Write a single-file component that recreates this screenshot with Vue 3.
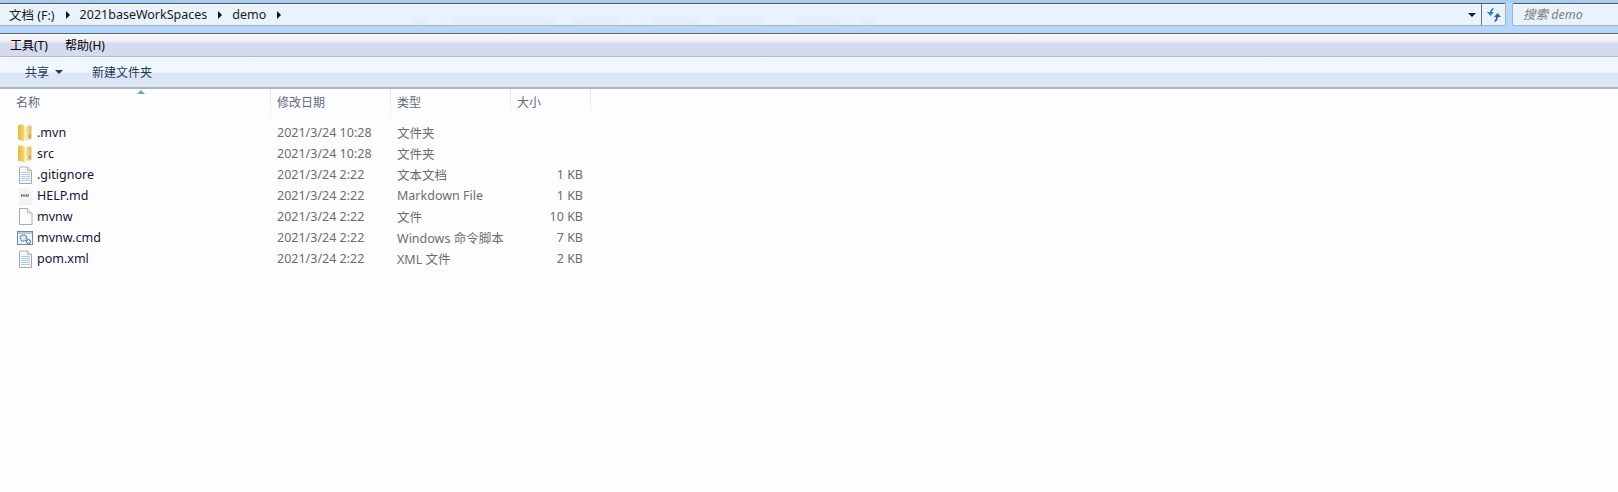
<script setup>
const files = [
  { name: '.mvn', date: '2021/3/24 10:28', type: '文件夹', size: '', icon: 'folder' },
  { name: 'src', date: '2021/3/24 10:28', type: '文件夹', size: '', icon: 'folder' },
  { name: '.gitignore', date: '2021/3/24 2:22', type: '文本文档', size: '1 KB', icon: 'text' },
  { name: 'HELP.md', date: '2021/3/24 2:22', type: 'Markdown File', size: '1 KB', icon: 'md' },
  { name: 'mvnw', date: '2021/3/24 2:22', type: '文件', size: '10 KB', icon: 'blank' },
  { name: 'mvnw.cmd', date: '2021/3/24 2:22', type: 'Windows 命令脚本', size: '7 KB', icon: 'cmd' },
  { name: 'pom.xml', date: '2021/3/24 2:22', type: 'XML 文件', size: '2 KB', icon: 'text' },
]
const crumbs = ['文档 (F:)', '2021baseWorkSpaces', 'demo']
const smudges = [
  { left: 415, width: 12 }, { left: 450, width: 105 }, { left: 572, width: 50 },
  { left: 650, width: 50 }, { left: 715, width: 50 }, { left: 795, width: 45 }, { left: 858, width: 16 },
]
const lines = [6.5, 8.5, 10.5, 12.5, 14.5]
</script>

<template>
  <div class="window">
    <div class="titlebar">
      <div class="address">
        <span v-for="s in smudges" :key="s.left" class="smudge" :style="{ left: s.left + 'px', width: s.width + 'px' }"></span>
        <div class="crumbs">
          <template v-for="c in crumbs" :key="c">
            <span class="crumb">{{ c }}</span>
            <span class="arrow"></span>
          </template>
        </div>
        <span class="drop"></span>
        <span class="refresh">
          <svg width="14" height="14" viewBox="0 0 14 14">
            <path d="M6.5 0 C4.5 .5 3.5 1.5 3 4 L0 4 L3.5 8 L7 4 L4.8 4 C5 2.8 5.6 2.2 6.5 1.8 Z" fill="#2f7fb8" />
            <path d="M7.5 14 C9.5 13.5 10.5 12.5 11 9 L14 9 L10.5 5 L7 9 L9.2 9 C9 11 8.4 11.8 7.5 12.2 Z" fill="#2c5fa5" />
          </svg>
        </span>
      </div>
      <div class="search">搜索 demo</div>
    </div>
    <div class="menubar">
      <span class="menu">工具(T)</span>
      <span class="menu">帮助(H)</span>
    </div>
    <div class="toolbar">
      <span class="tool">共享<span class="tool-caret"></span></span>
      <span class="tool">新建文件夹</span>
    </div>
    <div class="head">
      <div class="col c-name">名称<span class="sort"></span></div>
      <div class="col">修改日期</div>
      <div class="col">类型</div>
      <div class="col">大小</div>
    </div>
    <div class="list">
      <div v-for="f in files" :key="f.name" class="row">
        <div class="r-name">
          <span class="ico">
            <svg v-if="f.icon === 'folder'" width="16" height="18" viewBox="0 0 16 18">
              <defs>
                <linearGradient id="fl" x1="0" y1="0" x2="1" y2="0">
                  <stop offset="0" stop-color="#e2b740" />
                  <stop offset="1" stop-color="#f3d672" />
                </linearGradient>
                <linearGradient id="fr" x1="0" y1="0" x2="1" y2="0">
                  <stop offset="0" stop-color="#f0dc98" />
                  <stop offset="1" stop-color="#d8b865" />
                </linearGradient>
              </defs>
              <path d="M1 2 L2 0.5 L6 0.5 L7 2 L7 17 L2 16 L1 15 Z" fill="url(#fl)" />
              <path d="M7 2 L10 3 L10 16 L7 17 Z" fill="#f8ebb0" />
              <path d="M10 1.5 L14 1.5 L14.5 3 L14.5 15 L10 16 Z" fill="url(#fr)" />
              <rect x="12" y="11" width="1" height="2.5" fill="#5a9ad0" />
            </svg>
            <svg v-else-if="f.icon === 'text'" width="16" height="18" viewBox="0 0 16 18">
              <path d="M2.5 1.5 L4 .5 L5.5 1.5 L7 .5 L8.5 1.5 L10 .5 L11 1.5 L14.5 4.5 V17.5 H2.5 Z" fill="#f6f9fc" stroke="#a5a9af" />
              <path d="M10.5 1 V4.5 H14.5" fill="#e6e9ed" stroke="#b4b8bd" />
              <path v-for="y in lines" :key="y" :d="`M4 ${y} H13`" stroke="#b2cbe6" />
            </svg>
            <svg v-else-if="f.icon === 'md'" width="16" height="18" viewBox="0 0 16 18">
              <path d="M2 1 H11 L15 5 V18 H2 Z" fill="#f3f3f3" />
              <path d="M4 8.5 H12" stroke="#555" stroke-width="2.5" stroke-dasharray="1 .7" />
            </svg>
            <svg v-else-if="f.icon === 'blank'" width="16" height="18" viewBox="0 0 16 18">
              <path d="M2.5 .5 H10.5 L15 5 V16.5 H2.5 Z" fill="#fcfcfc" stroke="#a9acb0" />
              <path d="M10.5 .5 V5 H15" fill="#eeeff1" stroke="#b9bbbe" />
            </svg>
            <svg v-else width="16" height="16" viewBox="0 0 16 16">
              <rect x=".5" y="1.5" width="15" height="13" fill="#eff4f8" stroke="#7c8795" />
              <path d="M1 3 H15" stroke="#b6cbdf" stroke-width="2" />
              <circle cx="6.5" cy="8" r="3.2" fill="#dbe6ef" stroke="#55789a" stroke-width="1.3" stroke-dasharray="1.4 .7" />
              <circle cx="11.5" cy="11.5" r="2" fill="#e6eff6" stroke="#3e6f9d" />
            </svg>
          </span>
          <span class="fname">{{ f.name }}</span>
        </div>
        <div class="cell">{{ f.date }}</div>
        <div class="cell">{{ f.type }}</div>
        <div class="r-size">{{ f.size }}</div>
      </div>
    </div>
  </div>
</template>

<style>
html, body { margin: 0; background: #fdfdfd; }
</style>

<style scoped>
.window {
  width: 1618px;
  height: 492px;
  overflow: hidden;
  background: #fdfdfd;
  font-family: "Noto Sans", "Noto Sans CJK SC", sans-serif;
  font-size: 12px;
  color: #000;
}
.titlebar {
  height: 34px;
  box-sizing: border-box;
  padding-top: 3px;
  border-bottom: 1px solid #5a6570;
  background: linear-gradient(#a9cdf3 0, #a9cdf3 3px, #b4d8fb 3px);
  display: flex;
  align-items: flex-start;
}
.address, .search {
  height: 23px;
  box-sizing: border-box;
  border: 1px solid #a7b0ba;
  border-top-color: #4e5966;
  background: #e9f3fe;
  box-shadow: inset 0 1px 0 #fff;
}
.address {
  width: 1506px;
  display: flex;
  align-items: center;
  border-left: 0;
  border-radius: 0 2px 2px 0;
  position: relative;
}
.smudge {
  position: absolute;
  top: 15px;
  height: 4px;
  background: #e0e9f3;
  filter: blur(2px);
}
.crumbs {
  flex: 1;
  display: flex;
  align-items: center;
  padding-left: 9px;
  font-size: 12.5px;
  color: #1a1a1a;
  position: relative;
}
.arrow {
  width: 0;
  height: 0;
  margin: 0 10px 0 11px;
  border-left: 4px solid #111;
  border-top: 4px solid transparent;
  border-bottom: 4px solid transparent;
}
.drop {
  width: 0;
  height: 0;
  margin-right: 5px;
  border-top: 4px solid #10104a;
  border-left: 4px solid transparent;
  border-right: 4px solid transparent;
}
.refresh {
  width: 24px;
  height: 21px;
  box-sizing: border-box;
  border-left: 1px solid #6b7580;
  display: flex;
  align-items: center;
  justify-content: center;
}
.search {
  width: 106px;
  margin-left: 6px;
  border-right: 0;
  border-radius: 2px 0 0 2px;
  color: #7d7d7d;
  font-style: italic;
  font-size: 12.5px;
  padding-left: 10px;
  line-height: 21px;
}
.menubar {
  height: 23px;
  box-sizing: border-box;
  background: linear-gradient(#fbfbfd 0, #eceef6 8px, #d5daee 9px, #d5daee 100%);
  border-bottom: 1px solid #b5bccf;
  display: flex;
  align-items: center;
  padding-left: 10px;
  gap: 17px;
}
.toolbar {
  height: 32px;
  box-sizing: border-box;
  border-bottom: 2px solid #a8b6c8;
  background: linear-gradient(#eff6fe 0, #f3f8fe 15px, #dce6f4 16px, #dce6f4 100%);
  display: flex;
  align-items: center;
  padding-left: 25px;
  gap: 29px;
  color: #1e395b;
}
.tool { display: flex; align-items: center; }
.tool-caret {
  width: 0;
  height: 0;
  margin-left: 6px;
  border-top: 4px solid #1e395b;
  border-left: 4px solid transparent;
  border-right: 4px solid transparent;
}
.head {
  display: grid;
  grid-template-columns: 271px 120px 120px 80px;
  height: 26px;
  color: #5f6b7c;
}
.col {
  padding-left: 6px;
  line-height: 28px;
  box-sizing: border-box;
  position: relative;
  border-right: 1px solid;
  border-image: linear-gradient(#dce7f3, #f5f8fb) 1;
}
.c-name { padding-left: 16px; }
.sort {
  position: absolute;
  left: 137px;
  top: 1px;
  width: 0;
  height: 0;
  border-bottom: 4px solid #6f9fc4;
  border-left: 4px solid transparent;
  border-right: 4px solid transparent;
}
.list { padding-top: 7px; }
.row {
  display: grid;
  grid-template-columns: 270px 120px 120px 73px;
  height: 21px;
  align-items: center;
  color: #6d6d6d;
  font-size: 12.5px;
}
.r-name { display: flex; align-items: center; color: #14143c; }
.ico { width: 16px; margin-left: 17px; margin-right: 4px; display: flex; align-items: center; }
.cell { padding-left: 7px; }
.r-size { text-align: right; }
</style>
